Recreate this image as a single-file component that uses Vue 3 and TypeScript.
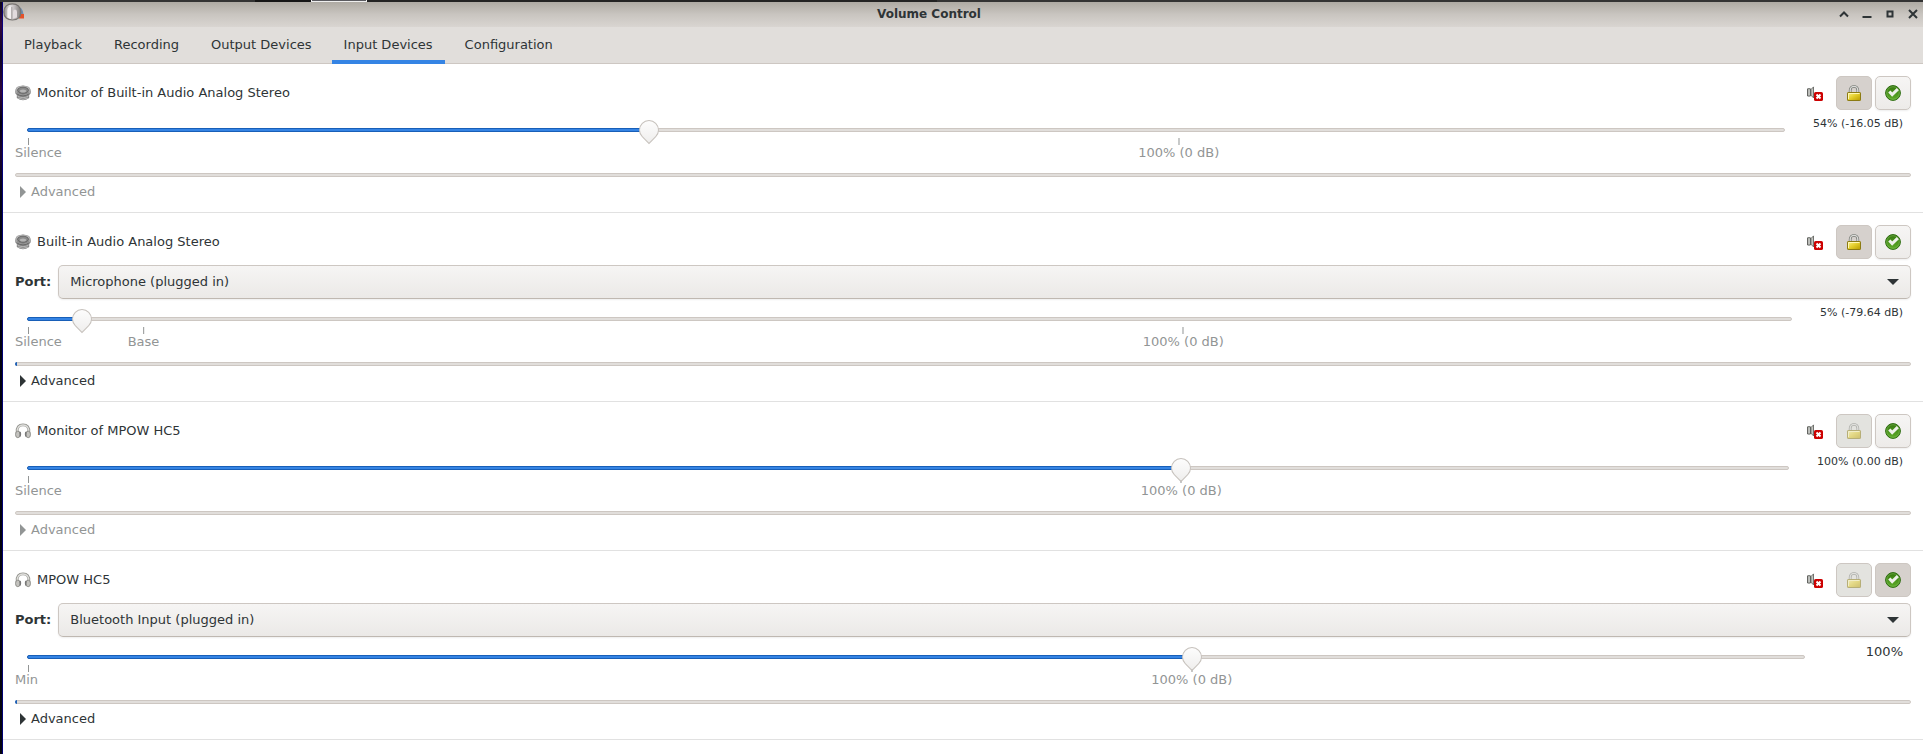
<script setup lang="ts">
import { reactive, ref } from 'vue'

interface Mark {
  at: number
  label: string
}

interface Device {
  name: string
  icon: 'speaker' | 'headphones'
  port?: string
  value: number
  readout: string
  large?: boolean
  marks: Mark[]
  peak: number
  monitor: boolean
  lockable: boolean
  fallback: boolean
}

const MAX = 152.6

const tabs = ['Playback', 'Recording', 'Output Devices', 'Input Devices', 'Configuration']
const current = ref('Input Devices')

const devices = reactive<Device[]>([
  {
    name: 'Monitor of Built-in Audio Analog Stereo',
    icon: 'speaker',
    value: 54,
    readout: '54% (-16.05 dB)',
    marks: [{ at: 0, label: 'Silence' }, { at: 100, label: '100% (0 dB)' }],
    peak: 0,
    monitor: true,
    lockable: true,
    fallback: false,
  },
  {
    name: 'Built-in Audio Analog Stereo',
    icon: 'speaker',
    port: 'Microphone (plugged in)',
    value: 4.7,
    readout: '5% (-79.64 dB)',
    marks: [{ at: 0, label: 'Silence' }, { at: 10, label: 'Base' }, { at: 100, label: '100% (0 dB)' }],
    peak: 0.12,
    monitor: false,
    lockable: true,
    fallback: false,
  },
  {
    name: 'Monitor of MPOW HC5',
    icon: 'headphones',
    value: 100,
    readout: '100% (0.00 dB)',
    marks: [{ at: 0, label: 'Silence' }, { at: 100, label: '100% (0 dB)' }],
    peak: 0,
    monitor: true,
    lockable: false,
    fallback: false,
  },
  {
    name: 'MPOW HC5',
    icon: 'headphones',
    port: 'Bluetooth Input (plugged in)',
    value: 100,
    readout: '100%',
    large: true,
    marks: [{ at: 0, label: 'Min' }, { at: 100, label: '100% (0 dB)' }],
    peak: 0.12,
    monitor: false,
    lockable: false,
    fallback: true,
  },
])

const percent = (v: number) => `${(v / MAX) * 100}%`
</script>

<template>
  <div class="desktop">
    <svg class="defs" width="0" height="0" aria-hidden="true">
      <defs>
        <linearGradient id="metal" x1="0" y1="0" x2="0" y2="1">
          <stop offset="0" stop-color="#c9c9c9" />
          <stop offset="1" stop-color="#777" />
        </linearGradient>
        <linearGradient id="gold" x1="0" y1="0" x2="1" y2="1">
          <stop offset="0" stop-color="#fff58a" />
          <stop offset="0.5" stop-color="#e3cd2a" />
          <stop offset="1" stop-color="#b89b00" />
        </linearGradient>
        <linearGradient id="green" x1="0" y1="0" x2="0" y2="1">
          <stop offset="0" stop-color="#35780f" />
          <stop offset="1" stop-color="#5fae2a" />
        </linearGradient>
        <linearGradient id="shell" x1="0" y1="0" x2="1" y2="0">
          <stop offset="0" stop-color="#8d8a88" />
          <stop offset="0.35" stop-color="#e3e0e0" />
          <stop offset="0.6" stop-color="#c4bfc0" />
          <stop offset="1" stop-color="#7b7876" />
        </linearGradient>
      </defs>
      <symbol id="speaker" viewBox="0 0 16 16">
        <path d="M2 2 Q8 -1 14 2 Q16.4 4.5 15.6 8.5 L14.2 10 V13 Q8 17.4 1.8 13 V10 L.4 8.5 Q-.4 4.5 2 2Z" fill="#858585" />
        <path d="M2.3 2.5 Q8 -.2 13.7 2.5 Q15.6 5 14.8 8 Q8 12.6 1.2 8 Q.4 5 2.3 2.5Z" fill="url(#metal)" stroke="#b5b5b5" stroke-width=".8" />
        <ellipse cx="8" cy="5.2" rx="5.4" ry="3" fill="#8a8a8a" stroke="#5c5c5c" stroke-width=".8" />
        <ellipse cx="8" cy="5.9" rx="3" ry="1.5" fill="#b5b5b5" />
        <path d="M1.6 8.7 Q8 13 14.4 8.7" fill="none" stroke="#5c5c5c" stroke-width=".8" />
        <path d="M2.4 11 Q8 14.4 13.6 11 M3 13 Q8 15.8 13 13" fill="none" stroke="#c2c2c2" stroke-width=".8" />
      </symbol>
      <symbol id="headphones" viewBox="0 0 16 16">
        <path d="M2.2 9.5 C1.6 4.2 4 1.9 8 1.9 S14.4 4.2 13.8 9.5" fill="none" stroke="#94948f" stroke-width="2.8" />
        <path d="M2.3 9 C1.9 4.4 4.3 2 8 2 S14.1 4.4 13.7 9" fill="none" stroke="#dededb" stroke-width="1.3" />
        <ellipse cx="2.8" cy="11.4" rx="2.3" ry="3.3" fill="#c4c3bf" stroke="#81817c" stroke-width=".8" />
        <ellipse cx="13.2" cy="11.4" rx="2.3" ry="3.3" fill="#c4c3bf" stroke="#81817c" stroke-width=".8" />
        <path d="M4.5 8.6 Q6.2 8.4 6.2 11 T4.8 14.4 Z M11.5 8.6 Q9.8 8.4 9.8 11 T11.2 14.4 Z" fill="#777" />
      </symbol>
      <symbol id="muted" viewBox="0 0 16 16">
        <path d="M.6 3.8 H3.4 V11 H.6Z" fill="#e4e5e1" stroke="#555753" />
        <path d="M3.9 4.6 L6.5 1.9 V12.9 L3.9 10.2Z" fill="#c3c5c0" stroke="#555753" stroke-width=".8" />
        <path d="M1.9 4.5 V10.4" stroke="#9c9e99" stroke-width=".8" />
        <rect x="7" y="7" width="9" height="9" rx="1.6" fill="#c00" />
        <path d="M9.5 9.5 L13.5 13.5 M13.5 9.5 L9.5 13.5" stroke="#fff" stroke-width="2" />
      </symbol>
      <symbol id="lock" viewBox="0 0 16 16">
        <path d="M4.2 8 V5.2 A3.8 3.8 0 0 1 11.8 5.2 V8" fill="none" stroke="#7d7f7a" stroke-width="2.8" />
        <path d="M4.2 8 V5.2 A3.8 3.8 0 0 1 11.8 5.2 V8" fill="none" stroke="#dcddda" stroke-width="1.3" />
        <rect x="1.5" y="7.5" width="13" height="8" rx=".6" fill="url(#gold)" stroke="#8b7a12" />
        <path d="M2.5 8.5 H13.5 M2.5 8.5 V14" stroke="#fff9b5" />
      </symbol>
      <symbol id="check" viewBox="0 0 16 16">
        <circle cx="8" cy="8" r="7.4" fill="url(#green)" stroke="#2c6b10" />
        <circle cx="8" cy="8" r="6.3" fill="none" stroke="#7dbb57" stroke-width=".6" />
        <path d="M4.3 6.4 L7.2 9.6 L12.8 4.2" fill="none" stroke="#eef1ea" stroke-width="3" />
      </symbol>
    </svg>

    <div class="panel"><span class="task"></span></div>
    <div class="stage">
      <div class="wallpaper"></div>
      <main class="window">
        <header class="titlebar">
          <svg class="app-icon" viewBox="0 0 22 18" aria-hidden="true">
            <path d="M14 3 Q19.5 4 20.5 11 H15Z" fill="#6e8db0" />
            <rect x="16" y="11" width="5" height="4.5" fill="#e4522a" />
            <path d="M.8 9 C.8 3.5 4.5 .8 9.3 .8 S17.8 3.5 17.8 9 S14 17 9.3 17 S.8 14.5 .8 9Z" fill="url(#shell)" stroke="#777370" stroke-width="1.2" />
            <path d="M4.4 14.5 V7 Q4.8 3.6 8 3.4 V16Z" fill="#f3f0f1" />
            <path d="M10 15.5 V9 Q10 6.4 12 6.4 T14 9 V14.5Z" fill="#e2dbde" />
            <path d="M8.8 4 V16 M14.7 7 V14" stroke="#9a9395" stroke-width=".8" />
          </svg>
          <h1>Volume Control</h1>
          <div class="window-buttons">
            <button aria-label="Shade"><svg viewBox="0 0 10 10"><path d="M1 7.5 L5 3.5 L9 7.5" /></svg></button>
            <button aria-label="Minimize"><svg viewBox="0 0 10 10"><path d="M.5 8 H9.5" /></svg></button>
            <button aria-label="Maximize"><svg viewBox="0 0 10 10"><path d="M2.5 2.5 H7.5 V7.5 H2.5Z" /></svg></button>
            <button aria-label="Close"><svg viewBox="0 0 10 10"><path d="M1 1 L9 9 M9 1 L1 9" /></svg></button>
          </div>
        </header>

        <nav class="tabs" role="tablist">
          <button
            v-for="tab in tabs"
            :key="tab"
            class="tab"
            :class="{ active: tab === current }"
            role="tab"
            :aria-selected="tab === current"
            @click="current = tab"
          >{{ tab }}</button>
        </nav>

        <section v-for="(d, i) in devices" :key="d.name" class="device">
          <div class="head">
            <svg class="icon" aria-hidden="true"><use :href="'#' + d.icon" /></svg>
            <h2>{{ d.name }}</h2>
            <div class="actions">
              <button class="action flat" aria-label="Mute audio"><svg class="icon"><use href="#muted" /></svg></button>
              <button class="action" :class="{ pressed: d.lockable }" :disabled="!d.lockable" aria-label="Lock channels together"><svg class="icon"><use href="#lock" /></svg></button>
              <button class="action" :class="{ pressed: d.fallback }" aria-label="Set as fallback" @click="d.fallback = !d.fallback"><svg class="icon"><use href="#check" /></svg></button>
            </div>
          </div>

          <div v-if="d.port" class="port">
            <label :for="'port-' + i">Port:</label>
            <div class="combo">
              <select :id="'port-' + i"><option>{{ d.port }}</option></select>
              <svg class="arrow" viewBox="0 0 12 6" aria-hidden="true"><path d="M0 0 H12 L6 6Z" /></svg>
            </div>
          </div>

          <div class="volume">
            <div class="scale">
              <div class="trough"><div class="fill" :style="{ width: percent(d.value) }"></div></div>
              <div class="marks">
                <div v-for="m in d.marks" :key="m.label" class="mark" :class="{ start: m.at === 0 }" :style="{ left: percent(m.at) }">
                  <span class="tick"></span><span class="mark-label">{{ m.label }}</span>
                </div>
              </div>
              <input v-model.number="d.value" type="range" min="0" :max="MAX" step="any" :aria-label="d.name + ' volume'" />
            </div>
            <output class="readout" :class="{ large: d.large }">{{ d.readout }}</output>
          </div>

          <progress class="peak" max="100" :value="d.peak" :aria-label="d.name + ' level'"></progress>

          <button class="advanced" :disabled="d.monitor" aria-expanded="false">
            <svg viewBox="0 0 6 12" aria-hidden="true"><path d="M0 0 L6 6 L0 12Z" /></svg>Advanced
          </button>
        </section>
      </main>
    </div>
  </div>
</template>

<style>
html,
body {
  background: #fff;
}
body {
  margin: 0;
  overflow: hidden;
}
</style>

<style scoped>
.desktop {
  display: flex;
  flex-direction: column;
  min-height: 100vh;
  font: 13px/17px "DejaVu Sans", sans-serif;
  color: #2e3436;
}
.defs {
  display: block;
  height: 0;
}
button,
select {
  font: inherit;
  color: inherit;
  margin: 0;
}
.panel {
  display: flex;
  height: 2px;
  background: linear-gradient(90deg, #333 255px, #161616 255px 367px, #232323 367px 937px, #333 937px);
}
.task {
  width: 54px;
  height: 1px;
  margin-left: 311px;
  border: solid #eee;
  border-width: 0 1px 1px;
  background: #5b5b60;
}
.stage {
  flex: 1;
  display: flex;
}
.wallpaper {
  width: 3px;
  background:
    linear-gradient(90deg, transparent 2px, rgba(0, 0, 150, 0.75) 2px),
    linear-gradient(#0d0618, #34073f 3%, #0c0522 7%, #30073c 12%, #050210 16%, #1b0430 20%, #030314 26%, #02020c 60%, #05050f);
}
.window {
  flex: 1;
  min-width: 0;
  background: #fff;
}

.titlebar {
  display: grid;
  grid-template-columns: auto 1fr 90px;
  align-items: center;
  height: 25px;
  background: linear-gradient(#aeaaa3, #c9c5c0 50%, #d9d5d1);
}
.app-icon {
  width: 22px;
  height: 18px;
  margin-bottom: 5px;
}
h1 {
  margin: 0;
  padding-bottom: 2px;
  font-size: 12px;
  line-height: 16px;
  text-align: center;
}
.window-buttons {
  justify-self: end;
  display: flex;
  gap: 13px;
  padding: 0 5px 2px 0;
}
.window-buttons button {
  display: flex;
  padding: 0;
  border: 0;
  background: none;
}
.window-buttons svg {
  width: 10px;
  height: 10px;
  fill: none;
  stroke: #2e3436;
  stroke-width: 2;
}

.tabs {
  display: flex;
  gap: 8px;
  height: 37px;
  padding-left: 9px;
  background: #e1dedb;
  box-shadow: inset 0 -1px #cdc7c2;
}
.tab {
  padding: 0 12px 2px;
  border: 0;
  background: none;
  white-space: nowrap;
}
.tab.active {
  box-shadow: inset 0 -4px #3584e4;
}

.device {
  display: flex;
  flex-direction: column;
  gap: 6px;
  padding: 12px;
  border-bottom: 1px solid #e1e1e1;
}
.head {
  display: flex;
  align-items: center;
  gap: 6px;
}
.icon {
  display: block;
  width: 16px;
  height: 16px;
}
h2 {
  flex: 1;
  margin: 0;
  padding-bottom: 2px;
  font-size: 13px;
  font-weight: 400;
}
.actions {
  display: flex;
  gap: 3px;
}
.action {
  display: flex;
  align-items: center;
  justify-content: center;
  width: 36px;
  height: 34px;
  padding: 0;
  border: 1px solid #cdc7c2;
  border-radius: 5px;
  background: linear-gradient(#f6f5f4, #edebe9);
  box-shadow: 0 1px 2px rgba(0, 0, 0, 0.07);
}
.action.flat {
  border-color: transparent;
  background: none;
  box-shadow: none;
}
.action.pressed {
  background: #d6d1cd;
  box-shadow: none;
}
.action:disabled {
  background: #e3e3df;
  box-shadow: none;
}
.action:disabled .icon {
  opacity: 0.5;
}

.port {
  display: flex;
  align-items: center;
  gap: 7px;
}
.port label {
  padding-bottom: 2px;
  font-weight: 700;
}
.combo {
  flex: 1;
  display: grid;
  align-items: center;
}
.combo > * {
  grid-area: 1 / 1;
}
.combo select {
  appearance: none;
  width: 100%;
  height: 34px;
  padding: 0 32px 2px 11px;
  border: 1px solid #cdc7c2;
  border-bottom-color: #bfb8b1;
  border-radius: 5px;
  background: linear-gradient(#f6f5f4, #ebe9e7);
  box-shadow: 0 1px 2px rgba(0, 0, 0, 0.07);
}
.arrow {
  justify-self: end;
  width: 12px;
  height: 6px;
  margin-right: 12px;
  fill: #2e3436;
  pointer-events: none;
}

.volume {
  display: flex;
  height: 51px;
}
.scale {
  flex: 1;
  display: grid;
  grid-template-rows: 24px 1fr;
  margin-left: 12px;
}
.trough {
  grid-area: 1 / 1;
  align-self: center;
  box-sizing: border-box;
  height: 4px;
  margin-top: 4px;
  border: 1px solid #cdc7c2;
  border-radius: 2px;
  background: #e1dedb;
}
.fill {
  box-sizing: border-box;
  height: 4px;
  margin: -1px;
  border: 1px solid #185fb8;
  border-radius: 2px;
  background: #3584e4;
}
.marks {
  grid-area: 1 / 1 / 3 / 2;
  position: relative;
  margin: 22px 1px 0;
}
.mark {
  position: absolute;
  display: flex;
  flex-direction: column;
  align-items: center;
  transform: translateX(-50%);
  color: #929595;
  line-height: 15px;
  white-space: nowrap;
}
.mark.start {
  align-items: flex-start;
  margin-left: -13px;
  transform: none;
}
.tick {
  width: 1px;
  height: 7px;
  background: #929595;
}
.start .tick {
  margin-left: 13px;
}
.scale input {
  grid-area: 1 / 1;
  align-self: center;
  appearance: none;
  width: calc(100% + 18px);
  height: 20px;
  margin: 4px -9px 0;
  background: none;
  position: relative;
}
.scale input::-webkit-slider-thumb {
  appearance: none;
  box-sizing: border-box;
  width: 20px;
  height: 20px;
  border: 1px solid #c6c1bc;
  border-radius: 50% 50% 0 50%;
  background: linear-gradient(135deg, #fff, #efeeed);
  transform: rotate(45deg);
}
.readout {
  min-width: 70px;
  margin: 0 8px 0 28px;
  font-size: 11px;
  line-height: 15px;
  text-align: right;
  white-space: nowrap;
}
.readout.large {
  font-size: 13px;
  line-height: 17px;
}

.peak {
  appearance: none;
  display: block;
  width: 100%;
  height: 4px;
  border: 0;
  border-radius: 2px;
  background: none;
  overflow: hidden;
}
.peak::-webkit-progress-bar {
  border-radius: 2px;
  background: #e1dedb;
  box-shadow: inset 0 0 0 1px #cdc7c2;
}
.peak::-webkit-progress-value {
  background: #1b5fb8;
}

.advanced {
  align-self: flex-start;
  display: flex;
  align-items: center;
  gap: 5px;
  height: 17px;
  padding: 0 0 0 5px;
  border: 0;
  background: none;
}
.advanced:disabled {
  color: #929595;
}
.advanced svg {
  width: 6px;
  height: 12px;
  fill: currentColor;
}
</style>
